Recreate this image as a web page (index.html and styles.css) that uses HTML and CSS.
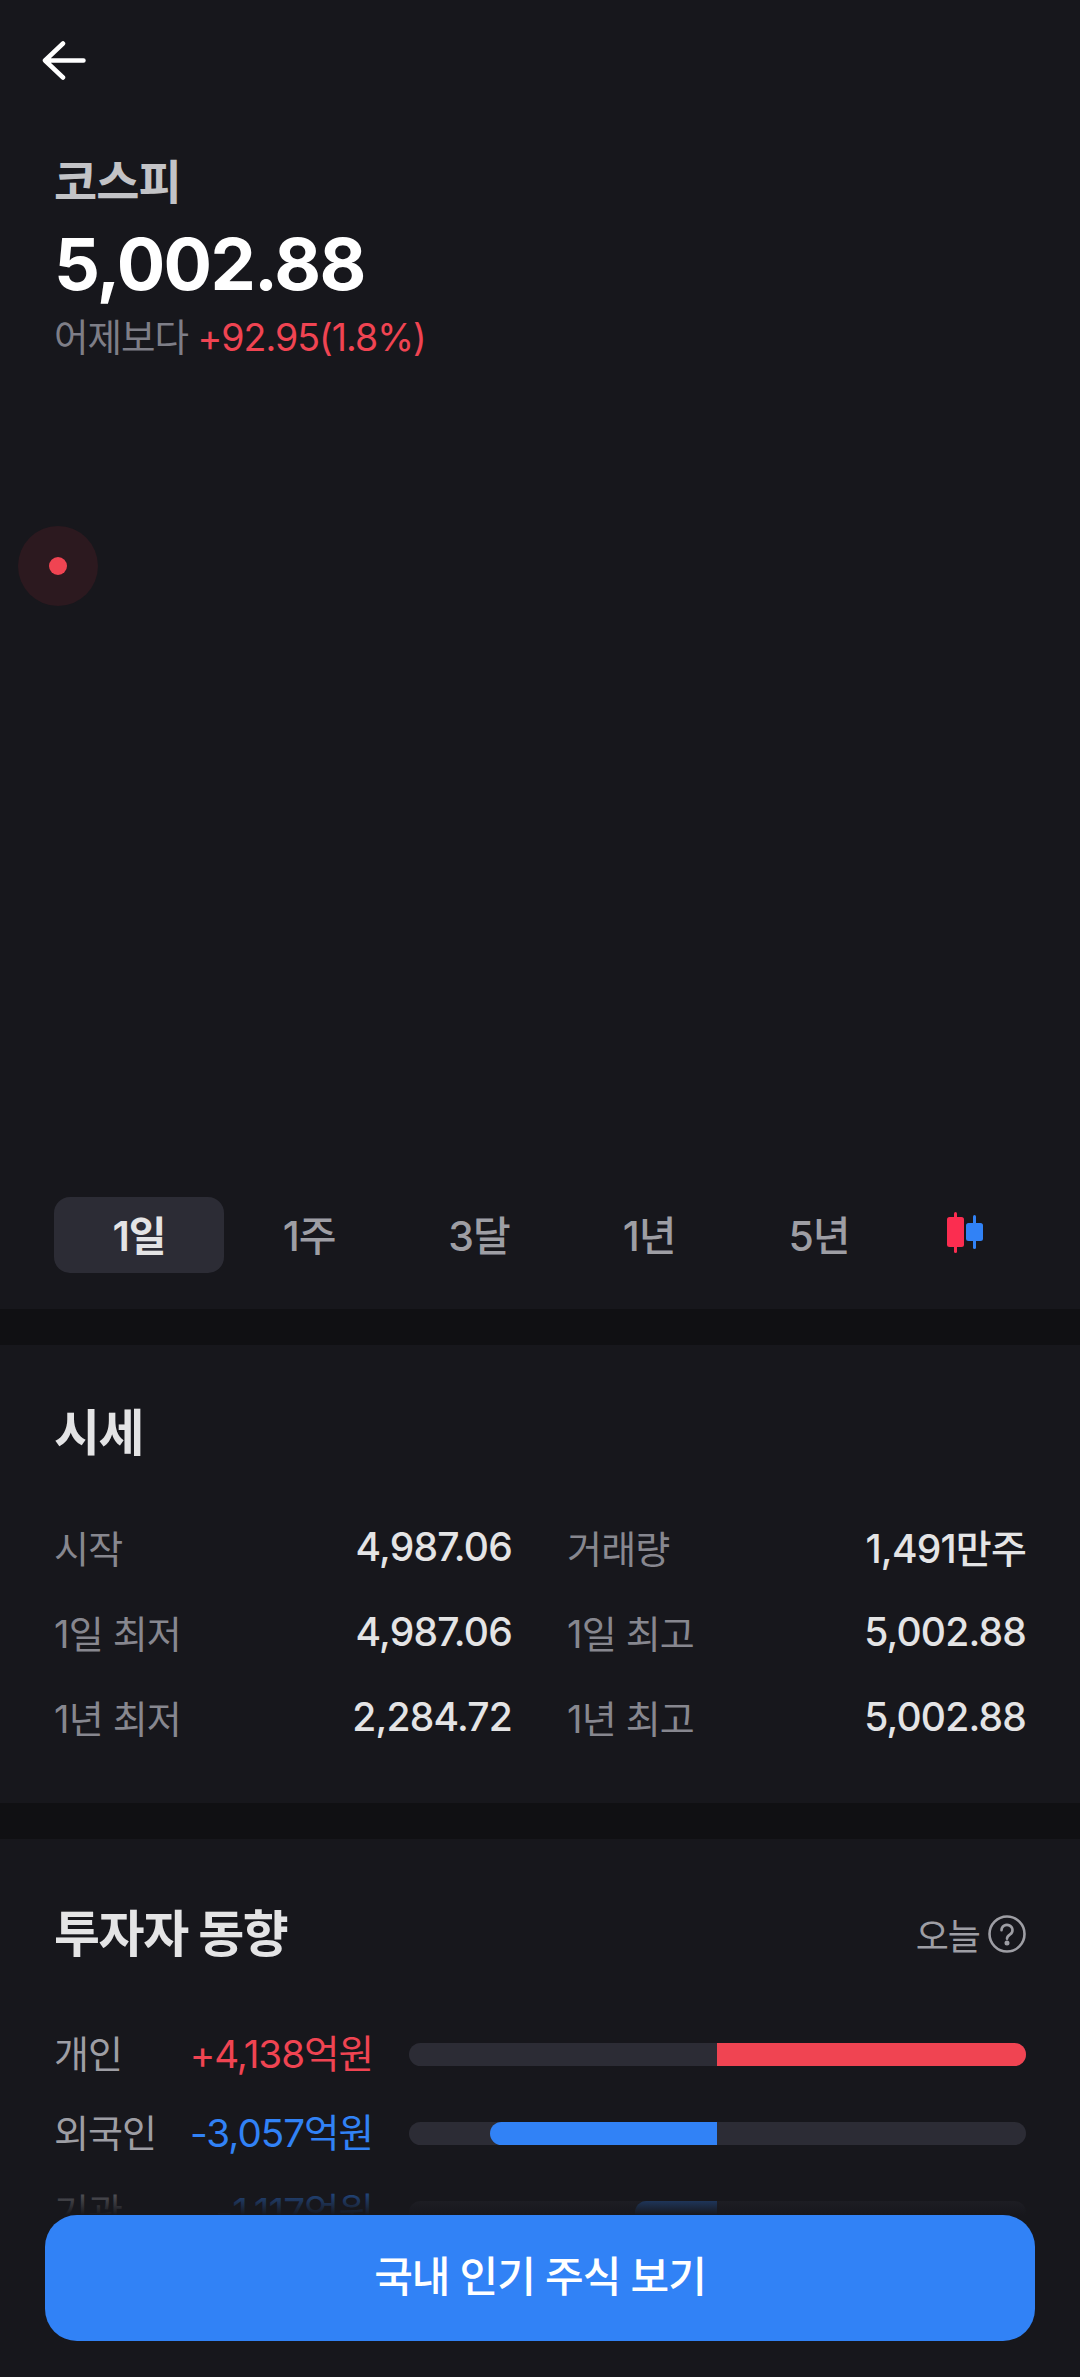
FILE: index.html
```html
<!DOCTYPE html>
<html lang="ko">
<head>
    <meta charset="UTF-8">
    <meta name="viewport" content="width=device-width, initial-scale=1.0">
    <title>코스피</title>
    <link rel="stylesheet" href="styles.css">
</head>
<body>
    <div class="page">
        <section class="top-section">
            <div class="back-row">
                <svg class="back-icon" width="44" height="39" viewBox="0 0 44 39" fill="none" stroke="#ffffff" stroke-width="4.5" stroke-linecap="round" stroke-linejoin="round">
                    <path d="M41.5 19.5H3M21 2.5L3 19.5L21 36.5"/>
                </svg>
            </div>
            <div class="price-head">
                <div class="index-name">코스피</div>
                <div class="index-price">5,002.88</div>
                <div class="index-change">어제보다 <span class="up">+92.95(1.8%)</span></div>
            </div>

            <!-- 차트 영역 -->
            <div class="chart">
                <div class="chart-halo"><div class="chart-dot"></div></div>
            </div>

            <div class="tabs">
                <div class="tab active">1일</div>
                <div class="tab">1주</div>
                <div class="tab">3달</div>
                <div class="tab">1년</div>
                <div class="tab">5년</div>
                <div class="tab tab-chart">
                    <svg width="36" height="42" viewBox="0 0 36 42">
                        <rect x="7" y="0" width="3" height="41" rx="1.5" fill="#fb2d50"/>
                        <rect x="0" y="5" width="17" height="30" rx="2.5" fill="#fb2d50"/>
                        <rect x="26" y="3" width="3" height="34" rx="1.5" fill="#3182f6"/>
                        <rect x="19" y="11" width="17" height="18" rx="2.5" fill="#3182f6"/>
                    </svg>
                </div>
            </div>
        </section>

        <section class="panel quote-panel">
            <h2 class="panel-title">시세</h2>
            <div class="quote-grid">
                <div class="quote-row"><span class="quote-label">시작</span><span class="quote-value">4,987.06</span></div>
                <div class="quote-row"><span class="quote-label">거래량</span><span class="quote-value">1,491만주</span></div>
                <div class="quote-row"><span class="quote-label">1일 최저</span><span class="quote-value">4,987.06</span></div>
                <div class="quote-row"><span class="quote-label">1일 최고</span><span class="quote-value">5,002.88</span></div>
                <div class="quote-row"><span class="quote-label">1년 최저</span><span class="quote-value">2,284.72</span></div>
                <div class="quote-row"><span class="quote-label">1년 최고</span><span class="quote-value">5,002.88</span></div>
            </div>
        </section>

        <section class="panel investor-panel">
            <div class="panel-head">
                <h2 class="panel-title">투자자 동향</h2>
                <div class="period">
                    <span>오늘</span>
                    <svg width="38" height="38" viewBox="0 0 38 38" fill="none" stroke="#9e9ea4" stroke-width="2.6" stroke-linecap="round">
                        <circle cx="19" cy="19" r="17.5"/>
                        <path d="M13.5 15.2a5.5 5.2 0 1 1 8.6 4.2c-2 1.4-3.1 2.2-3.1 4.3"/>
                        <circle cx="19" cy="28" r="1.2" fill="#9e9ea4"/>
                    </svg>
                </div>
            </div>
            <div class="flow-row">
                <span class="flow-label">개인</span>
                <span class="flow-amount up">+4,138억원</span>
                <div class="flow-track"><div class="flow-bar bar-up"></div></div>
            </div>
            <div class="flow-row">
                <span class="flow-label">외국인</span>
                <span class="flow-amount down">-3,057억원</span>
                <div class="flow-track"><div class="flow-bar bar-foreign"></div></div>
            </div>
            <div class="flow-row">
                <span class="flow-label">기관</span>
                <span class="flow-amount down">-1,117억원</span>
                <div class="flow-track"><div class="flow-bar bar-inst"></div></div>
            </div>
        </section>

        <div class="bottom-cta">
            <button class="cta-button">국내 인기 주식 보기</button>
        </div>
    </div>
</body>
</html>
```

FILE: styles.css
```css
* {
    box-sizing: border-box;
}
html, body {
    margin: 0;
    padding: 0;
}
body {
    background-color: #101013;
    font-family: Inter, "Noto Sans CJK KR", sans-serif;
    color: #e4e4e5;
}
.page {
    position: relative;
    width: 1080px;
    height: 2377px;
    overflow: hidden;
}
.up {
    color: #f04452;
}
.down {
    color: #3182f6;
}
.top-section {
    height: 1309px;
    background-color: #17171c;
    padding-top: 41px;
}
.back-row {
    height: 39px;
    padding-left: 42px;
}
.back-icon {
    display: block;
}
.price-head {
    padding: 72px 54px 0;
}
.index-name {
    font-size: 47px;
    font-weight: 600;
    line-height: 60px;
    letter-spacing: -1px;
    color: #c3c3c6;
}
.index-price {
    font-size: 72px;
    font-weight: 700;
    line-height: 104px;
    letter-spacing: -1.75px;
    color: #ffffff;
}
.index-change {
    font-size: 37.5px;
    line-height: 44px;
    letter-spacing: -1px;
    color: #7e7e87;
}
.chart {
    height: 837px;
    padding: 166px 18px 0;
}
.chart-halo {
    width: 80px;
    height: 80px;
    border-radius: 50%;
    background-color: #2c191f;
    display: flex;
    align-items: center;
    justify-content: center;
}
.chart-dot {
    width: 18px;
    height: 18px;
    border-radius: 50%;
    background-color: #f04452;
}
.tabs {
    display: flex;
    padding-left: 54px;
}
.tab {
    flex: 0 0 170px;
    height: 76px;
    padding-bottom: 4px;
    display: flex;
    align-items: center;
    justify-content: center;
    border-radius: 16px;
    font-size: 41px;
    font-weight: 500;
    letter-spacing: -1px;
    color: #9e9ea4;
}
.tab.active {
    background-color: #2c2c35;
    color: #e4e4e5;
    font-weight: 600;
}
.tab-chart {
    flex-basis: 122px;
}
.panel {
    background-color: #17171c;
    padding: 0 54px;
}
.quote-panel {
    height: 458px;
    margin-top: 36px;
    padding-top: 54px;
}
.panel-title {
    margin: 0;
    font-size: 50px;
    font-weight: 700;
    line-height: 68px;
    letter-spacing: -1.4px;
    color: #e4e4e5;
}
.quote-grid {
    display: grid;
    grid-template-columns: 458px 459px;
    column-gap: 55px;
    row-gap: 35px;
    margin-top: 54px;
}
.quote-row {
    display: flex;
    justify-content: space-between;
    align-items: center;
    height: 50px;
    font-size: 38px;
    letter-spacing: -0.8px;
}
.quote-label {
    color: #87878f;
}
.quote-value {
    font-size: 39px;
    font-weight: 500;
    color: #e4e4e5;
}
.investor-panel {
    height: 537px;
    margin-top: 36px;
    padding-top: 61px;
}
.panel-head {
    display: flex;
    justify-content: space-between;
    align-items: center;
    margin-bottom: 61px;
}
.period {
    display: flex;
    align-items: center;
    gap: 8px;
    font-size: 36px;
    letter-spacing: -1px;
    color: #9e9ea4;
}
.period svg {
    display: block;
}
.flow-row {
    display: flex;
    align-items: center;
    height: 50px;
    margin-bottom: 29px;
    font-size: 38px;
    letter-spacing: -1px;
}
.flow-label {
    width: 110px;
    margin-bottom: 6px;
    color: #9e9ea4;
}
.flow-amount {
    width: 209px;
    margin-bottom: 6px;
    font-size: 38.6px;
    text-align: right;
    white-space: nowrap;
}
.flow-track {
    position: relative;
    width: 617px;
    height: 23px;
    margin-left: 36px;
    border-radius: 12px;
    background-color: #2c2c35;
    overflow: hidden;
}
.flow-bar {
    position: absolute;
    top: 0;
    bottom: 0;
}
.bar-up {
    left: 308px;
    right: 0;
    background-color: #f04452;
}
.bar-foreign {
    left: 81px;
    width: 227px;
    border-radius: 12px 0 0 12px;
    background-color: #3182f6;
}
.bar-inst {
    left: 226px;
    width: 82px;
    border-radius: 12px 0 0 12px;
    background-color: #3182f6;
}
/* 하단 고정 버튼, 위쪽은 그라데이션으로 흐려짐 */
.bottom-cta {
    position: absolute;
    left: 0;
    right: 0;
    bottom: 0;
    padding: 50px 45px 36px;
    background: linear-gradient(to bottom, rgba(23, 23, 28, 0) 0, #17171c 50px);
}
.cta-button {
    display: block;
    width: 100%;
    height: 126px;
    padding: 0 0 10px;
    border: none;
    border-radius: 32px;
    background-color: #3182f6;
    color: #ffffff;
    font-family: inherit;
    font-size: 42px;
    font-weight: 500;
    letter-spacing: -1px;
}
```
